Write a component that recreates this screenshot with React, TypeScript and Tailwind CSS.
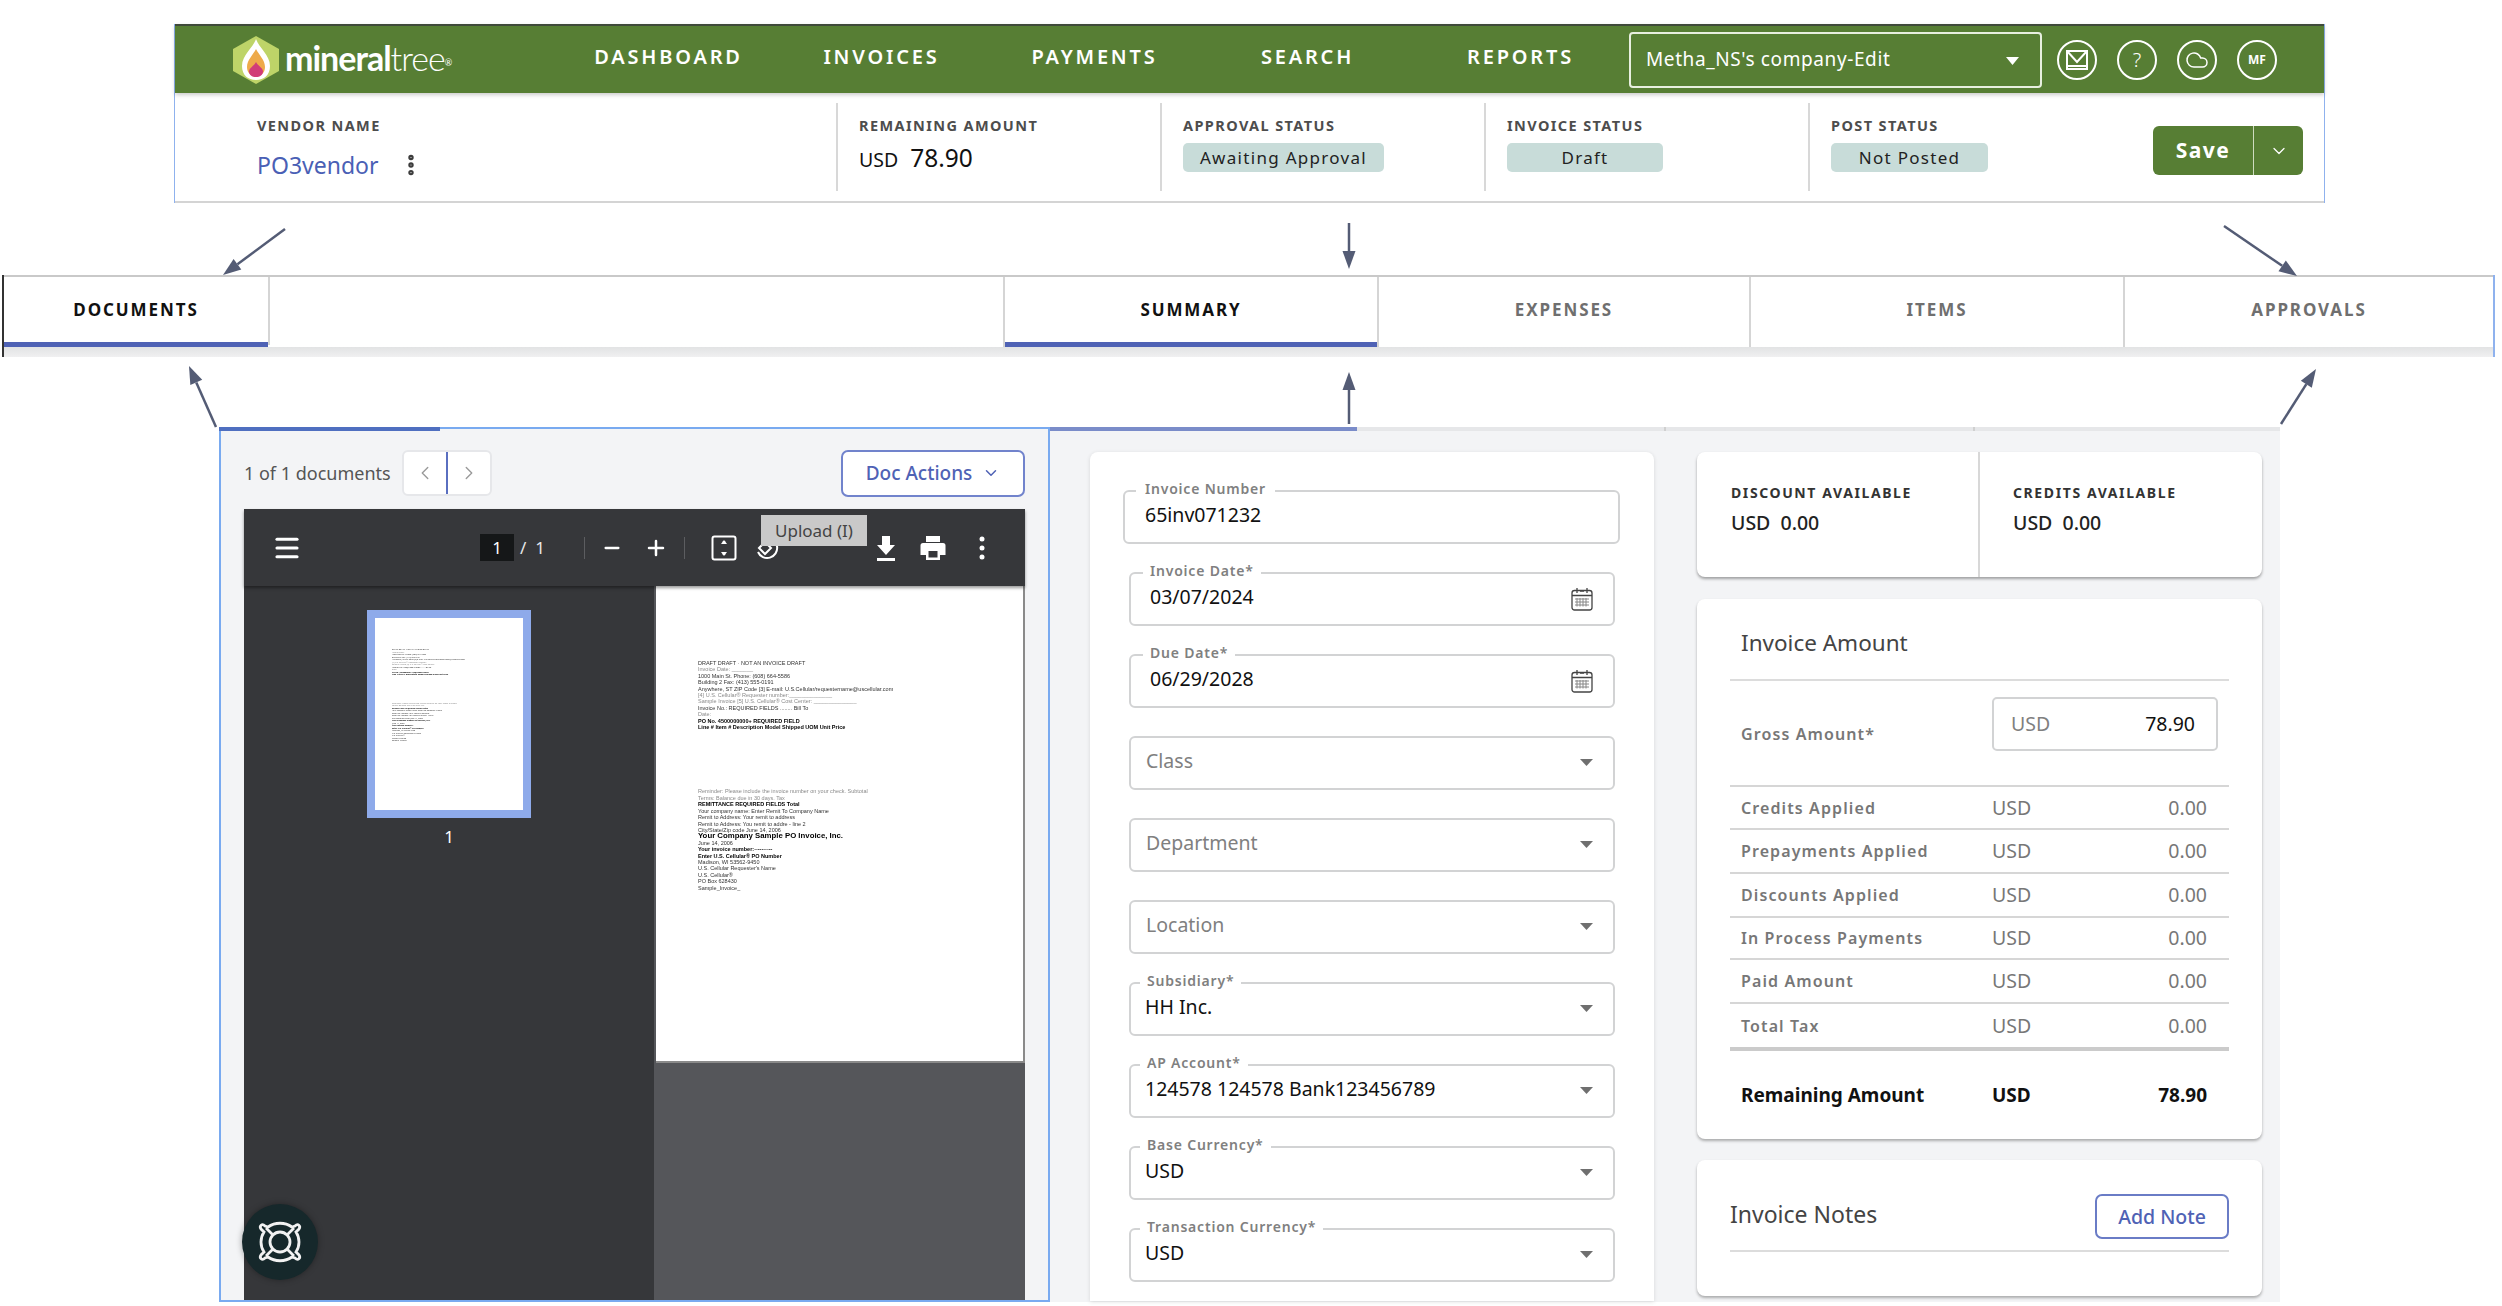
import { ChevronDown, ChevronLeft, ChevronRight, Cloud, Menu, Minus, MoreVertical, Plus } from "lucide-react";

const docTop = [
  ["n", "DRAFT DRAFT · NOT AN INVOICE DRAFT"],
  ["g", "Invoice Date: _______"],
  ["n", "1000 Main St. Phone: (608) 664-5586"],
  ["n", "Building 2 Fax: (413) 555-0191"],
  ["n", "Anywhere, ST ZIP Code [3] E-mail: U.S.Cellular/requestername@uscellular.com"],
  ["g", "[4] U.S. Cellular® Requester number:______________"],
  ["g", "Sample Invoice [5] U.S. Cellular® Cost Center: ______________"],
  ["n", "Invoice No.: REQUIRED FIELDS ........ Bill To"],
  ["g", "Date:"],
  ["b", "PO No. 4500000000+ REQUIRED FIELD"],
  ["b", "Line # Item # Description Model Shipped UOM Unit Price"],
];

const docBottom = [
  ["g", "Reminder: Please include the invoice number on your check. Subtotal"],
  ["g", "Terms: Balance due in 30 days. Tax"],
  ["b", "REMITTANCE REQUIRED FIELDS Total"],
  ["n", "Your company name: Enter Remit To Company Name"],
  ["n", "Remit to Address: Your remit to address"],
  ["n", "Remit to Address: You remit to addre - line 2"],
  ["n", "City/State/Zip code June 14, 2006"],
  ["h", "Your Company Sample PO Invoice, Inc."],
  ["n", "June 14, 2006"],
  ["b", "Your invoice number:----------"],
  ["b", "Enter U.S. Cellular® PO Number"],
  ["n", "Madison, WI 53562-9450"],
  ["n", "U.S. Cellular Requester's Name"],
  ["n", "U.S. Cellular®"],
  ["n", "PO Box 628430"],
  ["n", "Sample_Invoice_"],
];

const DocLine = ({ kind, text, small }: { kind: string; text: string; small?: boolean }) => {
  const tone =
    kind === "g" ? "text-[#8a8a8a]" : kind === "b" || kind === "h" ? "text-black font-bold" : "text-[#333]";
  if (small) {
    return <div className={`whitespace-nowrap text-[2px] leading-[2.5px] ${tone}`}>{text}</div>;
  }
  return (
    <div className={`whitespace-nowrap leading-[6.4px] ${kind === "h" ? "text-[7.8px]" : "text-[5.5px]"} ${tone}`}>
      {text}
    </div>
  );
};

const Arrow = ({ x1, y1, x2, y2 }: { x1: number; y1: number; x2: number; y2: number }) => {
  const len = Math.hypot(x2 - x1, y2 - y1);
  const ux = (x2 - x1) / len;
  const uy = (y2 - y1) / len;
  const bx = x2 - ux * 18;
  const by = y2 - uy * 18;
  const head = `${x2},${y2} ${bx - uy * 6.5},${by + ux * 6.5} ${bx + uy * 6.5},${by - ux * 6.5}`;
  return (
    <g>
      <line x1={x1} y1={y1} x2={bx} y2={by} stroke="#545c75" strokeWidth={2.5} />
      <polygon points={head} fill="#545c75" />
    </g>
  );
};

const Caret = () => (
  <svg width="13" height="7" viewBox="0 0 13 7" className="absolute right-[20px] top-[21px]">
    <polygon points="0,0 13,0 6.5,7" fill="#6f6f6f" />
  </svg>
);

const CalendarIcon = () => (
  <svg width="22" height="24" viewBox="0 0 22 24" fill="none" stroke="#444" className="absolute right-[20px] top-[13px]">
    <rect x="1" y="3.5" width="20" height="19.5" rx="2.5" strokeWidth="1.3" />
    <path d="M1 8.5h20M6 1v5M16 1v5M9 4h4" strokeWidth="1.3" />
    <path d="M4 12h14M4 15h14M4 18h14M6 11v8.5M9 11v8.5M12 11v8.5M15 11v8.5" strokeWidth="1" stroke="#888" />
  </svg>
);

type FieldProps = {
  label?: string;
  value: string;
  kind?: "date" | "select" | "text";
  placeholder?: boolean;
};

const Field = ({ label, value, kind = "select", placeholder }: FieldProps) => (
  <div className="relative h-[54px] ml-[39px] w-[486px] mt-[28px] border-2 border-[#d2d3d4] rounded-[6px]">
    {label && (
      <span className={`absolute -top-[12px] bg-white px-[7px] text-[14px] leading-[18px] font-semibold tracking-[0.8px] text-[#808080] ${kind === "date" ? "left-[12px]" : "left-[9px]"}`}>
        {label}
      </span>
    )}
    <span className={`absolute top-[10px] text-[19.5px] leading-[26px] ${placeholder ? "left-[15px] text-[#808080]" : "text-[#111]"} ${!placeholder && kind === "date" ? "left-[19px]" : ""} ${!placeholder && kind !== "date" ? "left-[14px]" : ""}`}>
      {value}
    </span>
    {kind === "date" ? <CalendarIcon /> : <Caret />}
  </div>
);

const amounts = [
  ["Credits Applied", "h-[43px] border-b-2"],
  ["Prepayments Applied", "h-[44px] border-b-2"],
  ["Discounts Applied", "h-[44px] border-b-2"],
  ["In Process Payments", "h-[42px] border-b-2"],
  ["Paid Amount", "h-[44px] border-b-2"],
];

const rowLabel = "w-[251px] text-[16px] font-semibold tracking-[1.1px] text-[#777]";

const Stat = ({ label, children, wide }: { label: string; children: React.ReactNode; wide?: boolean }) => (
  <div className={`h-[88px] border-l-2 border-[#d8d8d8] pl-[21px] pt-[12px] ${wide ? "w-[516px]" : "w-[324px]"}`}>
    <div className="text-[14.5px] leading-[20px] font-bold tracking-[1.4px] text-[#4d4d4d] whitespace-nowrap">{label}</div>
    {children}
  </div>
);

const Pill = ({ text, width }: { text: string; width: string }) => (
  <div className={`mt-[8px] h-[29px] ${width} rounded-[5px] bg-[#c8dcd9] text-[17px] leading-[29px] text-center tracking-[1.3px] text-[#222] whitespace-nowrap`}>
    {text}
  </div>
);

const CircleIcon = ({ children }: { children: React.ReactNode }) => (
  <div className="flex h-[40px] w-[40px] shrink-0 items-center justify-center rounded-full border-[2.5px] border-white text-white">
    {children}
  </div>
);

const Tab = ({ text, width, active, first }: { text: string; width: string; active?: boolean; first?: boolean }) => (
  <div className={`relative flex h-[70px] ${width} items-center justify-center text-[17px] font-bold tracking-[1.9px] ${first ? "" : "border-l-2 border-[#d5d5d5]"} ${active ? "text-[#111]" : "text-[#6f6f6f]"}`}>
    <span className="pb-[4px]">{text}</span>
    {active && <div className="absolute left-0 right-0 bottom-0 h-[5px] bg-[#4f62b5]" />}
  </div>
);

export default function App() {
  return (
    <div className="relative h-[1306px] w-[2502px] overflow-hidden bg-white [font-family:'Noto_Sans',sans-serif]">
      {/* top strip */}
      <div className="ml-[174px] mt-[24px] w-[2151px] border-x border-[#8fb2ee]">
        <div className="flex h-[69px] items-center border-t-2 border-[#3f4a3a] bg-[#577e34] shadow-[0_2px_4px_rgba(0,0,0,0.2)]">
          <div className="flex w-[387px] shrink-0 items-center pl-[57px]">
            <svg width="48" height="48" viewBox="0 0 48 48">
              <polygon points="24,0 47,13 47,35 24,48 1,35 1,13" fill="#bed468" />
              <path d="M24 3C27 12 38 19 38 30C38 39 32 44 24 44C16 44 10 39 10 30C10 19 21 12 24 3Z" fill="#fff" />
              <path d="M24 13C27 19 33 24 33 31C33 37 29 40 24 40C19 40 15 37 15 31C15 24 21 19 24 13Z" fill="#eeaa4a" />
              <path d="M24 26C26 30 31 32 31 35.500C31 39 28 41 24 41C20 41 17 39 17 35.500C17 32 22 30 24 26Z" fill="#d13d78" />
            </svg>
            <span className="ml-[5px] pb-[4px] text-[34px] leading-[40px] tracking-[-1px] text-white [font-family:Lato,sans-serif]">
              <span className="font-bold">mineral</span>
              <span className="font-light">tree</span>
              <sup className="text-[9px]">®</sup>
            </span>
          </div>
          <div className="grid w-[1065px] shrink-0 grid-cols-5 pb-[5px] text-center text-[20px] font-semibold tracking-[2.8px] text-white">
            <span>DASHBOARD</span>
            <span>INVOICES</span>
            <span>PAYMENTS</span>
            <span>SEARCH</span>
            <span>REPORTS</span>
          </div>
          <div className="relative ml-[2px] flex h-[56px] w-[413px] shrink-0 items-center rounded-[4px] border-2 border-[#e8efe0] pl-[15px] text-[19px] tracking-[0.6px] text-white">
            Metha_NS's company-Edit
            <svg width="13" height="8" viewBox="0 0 13 8" className="absolute right-[21px] top-[23px]">
              <polygon points="0,0 13,0 6.500,8" fill="#fff" />
            </svg>
          </div>
          <div className="ml-[15px] flex gap-[20px]">
            <CircleIcon>
              <svg width="24" height="22" viewBox="0 0 24 22" fill="none" stroke="#fff" strokeWidth="2">
                <path d="M2 2h20v18H2zM2 2l10 11L22 2M2 17h20" />
              </svg>
            </CircleIcon>
            <CircleIcon>
              <span className="text-[20px] font-light leading-none">?</span>
            </CircleIcon>
            <CircleIcon>
              <Cloud size={24} strokeWidth={1.5} />
            </CircleIcon>
            <CircleIcon>
              <span className="text-[12px] font-bold leading-none">MF</span>
            </CircleIcon>
          </div>
        </div>
        <div className="flex h-[110px] items-center border-b-2 border-[#d4d4d4]">
          <div className="h-[88px] w-[661px] shrink-0 pl-[82px] pt-[12px]">
            <div className="text-[14.5px] leading-[20px] font-bold tracking-[1.4px] text-[#4d4d4d]">VENDOR NAME</div>
            <div className="mt-[14px] flex items-center">
              <span className="text-[23px] leading-[32px] text-[#4a5fb5]">PO3vendor</span>
              <MoreVertical size={26} strokeWidth={3} className="ml-[20px] text-[#3c3c3c]" />
            </div>
          </div>
          <Stat label="REMAINING AMOUNT">
            <div className="mt-[7px] flex items-baseline whitespace-nowrap text-[#111]">
              <span className="text-[19.5px]">USD</span>
              <span className="ml-[12px] text-[24.5px] leading-[32px]">78.90</span>
            </div>
          </Stat>
          <Stat label="APPROVAL STATUS">
            <Pill text="Awaiting Approval" width="w-[201px]" />
          </Stat>
          <Stat label="INVOICE STATUS">
            <Pill text="Draft" width="w-[156px]" />
          </Stat>
          <Stat label="POST STATUS" wide>
            <div className="flex items-start justify-between">
              <Pill text="Not Posted" width="w-[157px]" />
              <div className="-mt-[9px] mr-[21px] flex h-[49px] w-[150px] overflow-hidden rounded-[6px] bg-[#577e34] text-white">
                <span className="flex w-[101px] items-center justify-center border-r border-[#cfdcc0] text-[21px] font-bold tracking-[1.5px]">Save</span>
                <span className="flex flex-1 items-center justify-center"><ChevronDown size={20} strokeWidth={1.5} /></span>
              </div>
            </div>
          </Stat>
        </div>
      </div>

      {/* tab strip */}
      <div className="ml-[2px] mt-[72px] w-[2493px] border-x-2 border-l-[#333] border-r-[#8fb2ee]">
        <div className="flex border-t-2 border-[#c9c9c9]">
          <Tab text="DOCUMENTS" width="w-[264px]" active first />
          <div className="h-[68px] w-[735px] border-l-2 border-[#d5d5d5]" />
          <Tab text="SUMMARY" width="w-[374px]" active />
          <Tab text="EXPENSES" width="w-[372px]" />
          <Tab text="ITEMS" width="w-[374px]" />
          <Tab text="APPROVALS" width="w-[370px]" />
        </div>
        <div className="h-[10px] bg-gradient-to-b from-[#e2e3e4] to-[#f0f0f1]" />
      </div>

      {/* content */}
      <div className="ml-[219px] mt-[70px] flex h-[875px] w-[2061px]">
        <div className="relative h-full w-[831px] shrink-0 border-2 border-[#79aaf0] bg-[#f3f4f6] px-[23px]">
          <div className="absolute -left-[2px] -top-[2px] h-[4px] w-[221px] bg-[#4f6fc0]" />
          <div className="flex h-[78px] items-center pt-[10px]">
            <span className="text-[18px] text-[#555]">1 of 1 documents</span>
            <div className="ml-[11px] flex h-[46px] w-[90px] rounded-[6px] border-2 border-[#e6e7ea] bg-white text-[#9a9a9a]">
              <span className="flex flex-1 items-center justify-center border-r-2 border-[#5a6fc0]"><ChevronLeft size={22} strokeWidth={1.5} /></span>
              <span className="flex flex-1 items-center justify-center"><ChevronRight size={22} strokeWidth={1.5} /></span>
            </div>
            <div className="ml-auto flex h-[47px] w-[184px] items-center justify-center gap-[10px] rounded-[7px] border-2 border-[#7183cc] bg-white text-[19px] font-medium text-[#4f62b5]">
              Doc Actions
              <ChevronDown size={18} strokeWidth={2} />
            </div>
          </div>

          <div className="relative mt-[2px] h-[791px] bg-[#36373a]">
            <div className="relative flex h-[77px] items-center text-white shadow-[0_2px_3px_rgba(0,0,0,0.4)]">
              <Menu size={30} strokeWidth={2.5} className="ml-[28px]" />
              <span className="ml-[178px] flex h-[27px] w-[34px] items-center justify-center bg-[#151718] text-[17px]">1</span>
              <span className="ml-[6px] text-[17px] text-[#e8e8e8]">/&nbsp;&nbsp;1</span>
              <span className="ml-[39px] h-[22px] w-px bg-[#5c5d60]" />
              <Minus size={22} strokeWidth={2.5} className="ml-[16px]" />
              <Plus size={24} strokeWidth={2.5} className="ml-[21px]" />
              <span className="ml-[16px] h-[22px] w-px bg-[#5c5d60]" />
              <svg width="26" height="26" viewBox="0 0 26 26" fill="none" stroke="#fff" strokeWidth="2" className="ml-[26px]">
                <rect x="1.500" y="1.500" width="23" height="23" rx="2" />
                <path d="M13 6v3M13 17v3" strokeWidth="2.500" />
                <polygon points="13,5 10,9 16,9" fill="#fff" stroke="none" />
                <polygon points="13,21 10,17 16,17" fill="#fff" stroke="none" />
              </svg>
              <svg width="26" height="26" viewBox="0 0 26 26" fill="none" stroke="#fff" strokeWidth="2" className="ml-[17px]">
                <path d="M13 3a10 10 0 1 1-9 14" />
                <path d="M5 13l6-6 6 6-6 6z" />
              </svg>
              <svg width="22" height="28" viewBox="0 0 22 28" fill="#fff" className="ml-[95px]">
                <path d="M7 2h8v9h5L11 21 2 11h5zM2 24h18v3H2z" />
              </svg>
              <svg width="26" height="26" viewBox="0 0 26 26" fill="#fff" className="ml-[23px]">
                <path d="M6 1h14v6H6zM3 8h20a2.500 2.500 0 0 1 2.500 2.500V20H20v5H6v-5H.5v-9.500A2.500 2.500 0 0 1 3 8zM8.500 16v6.500h9V16z" />
              </svg>
              <svg width="6" height="24" viewBox="0 0 6 24" fill="#fff" className="ml-[33px]">
                <circle cx="3" cy="3" r="2.500" />
                <circle cx="3" cy="12" r="2.500" />
                <circle cx="3" cy="21" r="2.500" />
              </svg>
              <div className="absolute left-[517px] top-[6px] h-[31px] w-[106px] bg-[#c9c9c9] text-center text-[17px] leading-[31px] text-[#444]">
                Upload (I)
              </div>
            </div>
            <div className="flex h-[714px]">
              <div className="flex w-[410px] shrink-0 flex-col items-center pt-[24px]">
                <div className="h-[208px] w-[164px] overflow-hidden border-[8px] border-[#8eaaea] bg-white pl-[17px] pt-[31px]">
                  <div className="blur-[0.2px]">
                    {docTop.map(([k, t], i) => <DocLine key={i} kind={k} text={t} small />)}
                    <div className="h-[26px]" />
                    {docBottom.map(([k, t], i) => <DocLine key={i} kind={k} text={t} small />)}
                  </div>
                </div>
                <span className="mt-[6px] text-[17px] text-white">1</span>
              </div>
              <div className="flex-1 bg-[#55565a] pl-[2px]">
                <div className="h-[477px] overflow-hidden border-r-2 border-b-2 border-[#8a8a8a] bg-white pl-[42px] pt-[74px] [font-family:'Liberation_Sans',sans-serif]">
                  <div className="blur-[0.35px]">
                    {docTop.map(([k, t], i) => <DocLine key={i} kind={k} text={t} />)}
                    <div className="h-[58px]" />
                    {docBottom.map(([k, t], i) => <DocLine key={i} kind={k} text={t} />)}
                  </div>
                </div>
              </div>
            </div>
            <div className="absolute -left-[2px] top-[695px] flex h-[76px] w-[76px] items-center justify-center rounded-full bg-[#16282b] shadow-[0_0_6px_rgba(0,0,0,0.35)]">
              <svg width="50" height="50" viewBox="0 0 50 50" fill="none" stroke="#f2f2f2" strokeWidth="2.800">
                <circle cx="25" cy="25" r="10" />
                <path d="M10 9C7 6 4 9 6 12L9 15C5 21 5 29 9 35L6 38C4 41 7 44 10 41L13 40C20 45 30 45 37 40L40 41C43 44 46 41 44 38L41 35C45 29 45 21 41 15L44 12C46 9 43 6 40 9L37 10C30 5 20 5 13 10Z" />
                <path d="M11 11L18 18M39 11L32 18M11 39L18 32M39 39L32 32" />
              </svg>
            </div>
          </div>
        </div>

        <div className="relative flex flex-1 items-start gap-[43px] border-t-4 border-[#e6e7e9] bg-[#f3f4f6] pl-[40px] pt-[21px]">
          <div className="absolute -top-[4px] left-0 h-[4px] w-[307px] bg-[#7a8cc9]" />
          <div className="absolute -top-[4px] left-[614px] h-[4px] w-[2px] bg-[#d0d0d0]" />
          <div className="absolute -top-[4px] left-[923px] h-[4px] w-[2px] bg-[#d0d0d0]" />
          <div className="h-[849px] w-[564px] shrink-0 overflow-hidden rounded-t-[8px] bg-white pt-[10px] shadow-[0_1px_4px_rgba(0,0,0,0.12)]">
            <div className="relative ml-[33px] mt-[28px] h-[54px] w-[497px] rounded-[6px] border-2 border-[#d2d3d4]">
              <span className="absolute -top-[12px] left-[11px] bg-white px-[9px] text-[14px] leading-[18px] font-semibold tracking-[0.8px] text-[#808080]">
                Invoice Number
              </span>
              <span className="absolute left-[20px] top-[10px] text-[19.5px] leading-[26px] text-[#111]">65inv071232</span>
            </div>
            <Field label="Invoice Date*" value="03/07/2024" kind="date" />
            <Field label="Due Date*" value="06/29/2028" kind="date" />
            <Field value="Class" placeholder />
            <Field value="Department" placeholder />
            <Field value="Location" placeholder />
            <Field label="Subsidiary*" value="HH Inc." />
            <Field label="AP Account*" value="124578 124578 Bank123456789" />
            <Field label="Base Currency*" value="USD" />
            <Field label="Transaction Currency*" value="USD" />
          </div>

          <div className="w-[565px] shrink-0">
            <div className="flex h-[125px] rounded-[8px] bg-white shadow-[0_2px_3px_rgba(0,0,0,0.35)]">
              <div className="h-full w-[283px] border-r-2 border-[#d8d8d8] pl-[34px] pt-[31px]">
                <div className="text-[14px] leading-[20px] font-bold tracking-[1.6px] text-[#333]">DISCOUNT AVAILABLE</div>
                <div className="mt-[9px] whitespace-pre text-[19.5px] leading-[22px] font-medium text-[#222]">USD  0.00</div>
              </div>
              <div className="pl-[33px] pt-[31px]">
                <div className="text-[14px] leading-[20px] font-bold tracking-[1.6px] text-[#333]">CREDITS AVAILABLE</div>
                <div className="mt-[9px] whitespace-pre text-[19.5px] leading-[22px] font-medium text-[#222]">USD  0.00</div>
              </div>
            </div>

            <div className="mt-[22px] h-[540px] rounded-[8px] bg-white px-[33px] shadow-[0_2px_3px_rgba(0,0,0,0.3)]">
              <div className="flex h-[82px] items-center border-b-2 border-[#dcdcdc] pl-[11px] pt-[8px] text-[22.500px] text-[#444]">
                Invoice Amount
              </div>
              <div className="flex h-[106px] items-center border-b-2 border-[#d6d6d6] pl-[11px]">
                <span className={`${rowLabel} pt-[2px]`}>Gross Amount*</span>
                <div className="-mt-[18px] flex h-[54px] w-[226px] items-center justify-between rounded-[5px] border-2 border-[#d2d3d4] pl-[17px] pr-[21px] text-[19.5px]">
                  <span className="text-[#808080]">USD</span>
                  <span className="text-[#111]">78.90</span>
                </div>
              </div>
              {amounts.map(([name, cls]) => (
                <div key={name} className={`flex items-center border-[#d6d6d6] pl-[11px] pr-[22px] ${cls}`}>
                  <span className={rowLabel}>{name}</span>
                  <span className="text-[19.5px] text-[#777]">USD</span>
                  <span className="ml-auto text-[19.5px] text-[#777]">0.00</span>
                </div>
              ))}
              <div className="flex h-[47px] items-center border-b-[4px] border-[#cbcbcb] pl-[11px] pr-[22px]">
                <span className={rowLabel}>Total Tax</span>
                <span className="text-[19.5px] text-[#777]">USD</span>
                <span className="ml-auto text-[19.5px] text-[#777]">0.00</span>
              </div>
              <div className="flex h-[88px] items-center pl-[11px] pr-[22px] text-[19px] font-bold text-[#111]">
                <span className="w-[251px]">Remaining Amount</span>
                <span>USD</span>
                <span className="ml-auto">78.90</span>
              </div>
            </div>

            <div className="mt-[21px] h-[136px] rounded-[8px] bg-white px-[33px] pt-[34px] shadow-[0_2px_3px_rgba(0,0,0,0.3)]">
              <div className="flex h-[58px] items-start justify-between border-b-2 border-[#dcdcdc]">
                <span className="pt-[4px] text-[23px] leading-[32px] text-[#444]">Invoice Notes</span>
                <span className="flex h-[45px] w-[134px] items-center justify-center rounded-[7px] border-2 border-[#6a7cc6] text-[19.5px] font-medium text-[#4f62b5]">
                  Add Note
                </span>
              </div>
            </div>
          </div>
        </div>
      </div>

      {/* annotation arrows */}
      <svg width="2502" height="1306" className="pointer-events-none absolute left-0 top-0">
        <Arrow x1={285} y1={229} x2={223} y2={275} />
        <Arrow x1={1349} y1={223} x2={1349} y2={269} />
        <Arrow x1={2224} y1={226} x2={2297} y2={276} />
        <Arrow x1={216} y1={427} x2={189} y2={366} />
        <Arrow x1={1349} y1={424} x2={1349} y2={372} />
        <Arrow x1={2281} y1={424} x2={2316} y2={369} />
      </svg>
    </div>
  );
}
